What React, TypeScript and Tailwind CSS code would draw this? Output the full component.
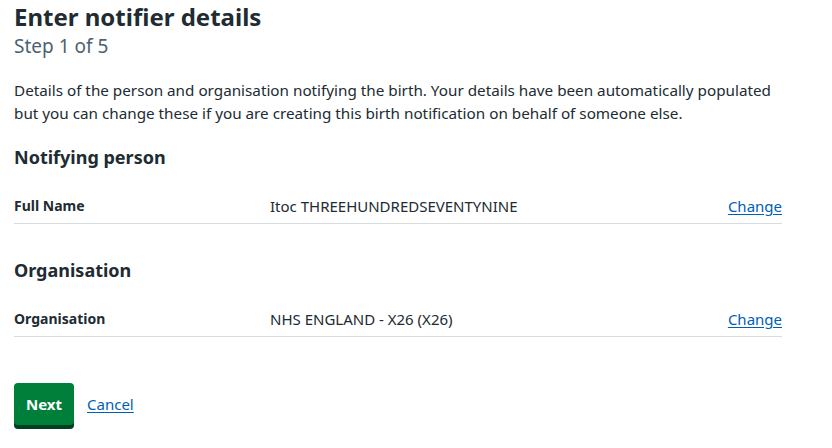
import React from "react";

const font = { fontFamily: '"Noto Sans", "Open Sans", Arial, sans-serif' };

function Row({ k, v }: { k: string; v: string }) {
  return (
    <div className="flex items-center border-b border-[#d8dde0] pt-[8px] pb-[7px] leading-[20px] text-[15px] mt-[18px]">
      <div className="w-[256px] font-bold text-[14px]">{k}</div>
      <div className="flex-1">{v}</div>
      <a href="#" className="text-[#005eb8] underline underline-offset-2">Change</a>
    </div>
  );
}

export default function App() {
  return (
    <div className="bg-white text-[#212b32] w-[832px] h-[448px] overflow-hidden pl-[14px] pr-[50px] pt-[2px]" style={font}>
      <h1 className="text-[24px] font-bold leading-[30px]">Enter notifier details</h1>
      <div className="text-[19px] text-[#4c6272] leading-[26px] mt-[1px]">Step 1 of 5</div>
      <p className="text-[15.25px] leading-[23px] mt-[20px]">
        Details of the person and organisation notifying the birth. Your details have been automatically populated but you can change these if you are creating this birth notification on behalf of someone else.
      </p>
      <h2 className="text-[18px] font-bold leading-[26px] mt-[19px]">Notifying person</h2>
      <Row k="Full Name" v="Itoc THREEHUNDREDSEVENTYNINE" />
      <h2 className="text-[18px] font-bold leading-[26px] mt-[33px]">Organisation</h2>
      <Row k="Organisation" v="NHS ENGLAND - X26 (X26)" />
      <div className="flex items-center gap-[13px] mt-[46px]">
        <button className="bg-[#007f3b] text-white font-bold text-[15px] h-[42px] px-[12px] rounded-[4px] shadow-[0_4px_0_#00401e]">Next</button>
        <a href="#" className="text-[#005eb8] underline underline-offset-2 text-[15px]">Cancel</a>
      </div>
    </div>
  );
}
